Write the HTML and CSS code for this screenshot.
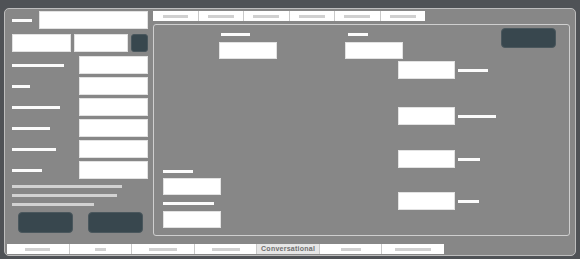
FILE: index.html
```html
<!DOCTYPE html>
<html>
<head>
<meta charset="utf-8">
<link rel="stylesheet" href="styles.css">
</head>
<body>
<div class="panel">
  <div class="main">
    <div class="left">
      <div class="row1">
        <span class="lbl w20"></span>
        <span class="input in109"></span>
      </div>
      <div class="row2">
        <span class="input in59"></span>
        <span class="input in54"></span>
        <span class="dbtn small"></span>
      </div>
      <div class="fields">
        <div class="field"><span class="lbl w52"></span><span class="input in69"></span></div>
        <div class="field"><span class="lbl w18"></span><span class="input in69"></span></div>
        <div class="field"><span class="lbl w48"></span><span class="input in69"></span></div>
        <div class="field"><span class="lbl w38"></span><span class="input in69"></span></div>
        <div class="field"><span class="lbl w44"></span><span class="input in69"></span></div>
        <div class="field"><span class="lbl w30"></span><span class="input in69"></span></div>
      </div>
      <div class="lines">
        <span class="line w110"></span>
        <span class="line w105"></span>
        <span class="line w82"></span>
      </div>
      <div class="buttons">
        <span class="dbtn big"></span>
        <span class="dbtn big"></span>
      </div>
    </div>
    <div class="right">
      <div class="tabs top">
        <span class="tab"><i class="bar b25"></i></span>
        <span class="tab"><i class="bar b26"></i></span>
        <span class="tab"><i class="bar b26"></i></span>
        <span class="tab"><i class="bar b26"></i></span>
        <span class="tab"><i class="bar b26"></i></span>
        <span class="tab"><i class="bar b26"></i></span>
      </div>
      <div class="inner">
        <div class="colA">
          <span class="lbl w30"></span>
          <span class="input in58 gapA"></span>
          <span class="lbl w51 gapB"></span>
          <span class="input in58 gapC"></span>
        </div>
        <div class="colB">
          <span class="lbl w29 ind2"></span>
          <span class="input in58 gapD"></span>
        </div>
        <div class="colC">
          <span class="lbl w20 ind3"></span>
          <span class="input in58 gapD"></span>
        </div>
        <div class="colD">
          <div class="pair"><span class="input in57"></span><span class="lbl w30"></span></div>
          <div class="pair p2"><span class="input in57"></span><span class="lbl w38"></span></div>
          <div class="pair p3"><span class="input in57"></span><span class="lbl w22"></span></div>
          <div class="pair p4"><span class="input in57"></span><span class="lbl w21"></span></div>
        </div>
        <span class="dbtn wide"></span>
      </div>
    </div>
  </div>
  <div class="tabs bottom">
    <span class="tab"><i class="bar b25"></i></span>
    <span class="tab"><i class="bar b11"></i></span>
    <span class="tab"><i class="bar b28"></i></span>
    <span class="tab"><i class="bar b28"></i></span>
    <span class="tab active">Conversational</span>
    <span class="tab"><i class="bar b20"></i></span>
    <span class="tab"><i class="bar b36"></i></span>
  </div>
</div>
</body>
</html>
```

FILE: styles.css
```css
* { box-sizing: border-box; }
html, body { margin: 0; padding: 0; }
body {
  width: 580px;
  height: 259px;
  background: #4f5256;
  font-family: "Liberation Sans", Arial, sans-serif;
  overflow: hidden;
}
.panel {
  margin: 8px 4px 0 4px;
  width: 572px;
  height: 248px;
  background: #878787;
  border: 1px solid #bdbdbd;
  border-radius: 5px;
  padding-top: 2px;
  display: flex;
  flex-direction: column;
}
.main {
  display: flex;
  height: 225px;
  padding-left: 7px;
}
.left {
  width: 136px;
  display: flex;
  flex-direction: column;
}
.input {
  display: block;
  background: #fff;
  border: 1px solid #e2e2e2;
  height: 18px;
  flex: none;
}
.lbl {
  display: block;
  height: 3px;
  background: #fbfbfb;
  flex: none;
}
.dbtn {
  display: block;
  background: #38474e;
  border: 1px solid #4a575d;
  border-radius: 4px;
  flex: none;
}
.row1 {
  display: flex;
  align-items: center;
  justify-content: space-between;
  height: 18px;
}
.row2 {
  display: flex;
  margin-top: 5px;
  gap: 3px;
  height: 18px;
}
.dbtn.small { width: 17px; height: 18px; border-radius: 3px; }
.fields {
  display: flex;
  flex-direction: column;
  gap: 3px;
  margin-top: 4px;
}
.field {
  display: flex;
  align-items: center;
  justify-content: space-between;
  height: 18px;
}
.lines {
  display: flex;
  flex-direction: column;
  gap: 6px;
  margin-top: 6px;
}
.line {
  display: block;
  height: 3px;
  background: #d2d2d2;
}
.buttons {
  display: flex;
  gap: 15px;
  margin-top: 6px;
  padding-left: 6px;
}
.dbtn.big { width: 55px; height: 21px; }

.w18 { width: 18px; } .w20 { width: 20px; } .w21 { width: 21px; } .w22 { width: 22px; }
.w29 { width: 29px; } .w30 { width: 30px; } .w38 { width: 38px; } .w44 { width: 44px; }
.w48 { width: 48px; } .w51 { width: 51px; } .w52 { width: 52px; }
.w82 { width: 82px; } .w105 { width: 105px; } .w110 { width: 110px; }
.in109 { width: 109px; } .in59 { width: 59px; } .in54 { width: 54px; }
.in69 { width: 69px; } .in58 { width: 58px; } .in57 { width: 57px; }

.right {
  margin-left: 5px;
  width: 417px;
  display: flex;
  flex-direction: column;
}
.tabs {
  display: flex;
  background: #fff;
  height: 10px;
  flex: none;
}
.tabs.top { width: 272px; }
.tab {
  flex: 1;
  display: flex;
  align-items: center;
  justify-content: center;
  border-right: 1px solid #c9c9c9;
  font-size: 7px;
  font-weight: bold;
  color: #6e6e6e;
  letter-spacing: 0.25px;
  line-height: 10px;
}
.tab:last-child { border-right: none; }
.tab.active { background: #e6e6e6; }
.bar {
  display: block;
  height: 3px;
  background: #d0d0d0;
}
.b11 { width: 11px; } .b20 { width: 20px; } .b25 { width: 25px; } .b26 { width: 26px; }
.b28 { width: 28px; } .b36 { width: 36px; }

.inner {
  margin-top: 3px;
  height: 212px;
  border: 1px solid #cfcfcf;
  border-radius: 3px;
  display: flex;
  align-items: flex-start;
}
.colA {
  margin-left: 9px;
  width: 56px;
  align-self: stretch;
  display: flex;
  flex-direction: column;
  justify-content: flex-end;
  padding-bottom: 7px;
}
.colA .input, .colB .input, .colC .input { height: 17px; }
.gapA { margin-top: 5px; }
.gapB { margin-top: 7px; }
.gapC { margin-top: 6px; }
.gapD { margin-top: 6px; }
.colB {
  width: 58px;
  padding-top: 8px;
}
.ind2 { margin-left: 2px; }
.colC {
  margin-left: 68px;
  width: 58px;
  padding-top: 8px;
}
.ind3 { margin-left: 3px; }
.colD {
  margin-left: -5px;
  padding-top: 36px;
  display: flex;
  flex-direction: column;
  width: 98px;
}
.pair {
  display: flex;
  align-items: center;
  gap: 3px;
}
.p2 { margin-top: 28px; }
.p3 { margin-top: 25px; }
.p4 { margin-top: 24px; }
.dbtn.wide {
  width: 55px;
  height: 20px;
  margin-left: 5px;
  margin-top: 3px;
}
.tabs.bottom {
  margin-top: 8px;
  margin-left: 2px;
  width: 437px;
}
```
